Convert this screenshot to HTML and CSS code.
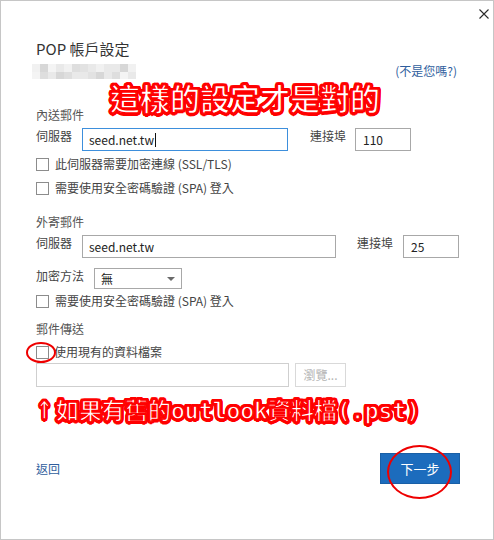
FILE: index.html
```html
<!DOCTYPE html>
<html lang="zh-Hant">
<head>
<meta charset="utf-8">
<title>POP 帳戶設定</title>
<link rel="stylesheet" href="styles.css">
</head>
<body>
<div class="window">
  <div class="topbar">
    <svg class="close" width="10" height="10" viewBox="0 0 10 10"><path d="M0.5 0.5 L9.5 9.5 M9.5 0.5 L0.5 9.5" stroke="#2b2b2b" stroke-width="1.1" fill="none"/></svg>
  </div>
  <div class="content">
    <h1 class="title">POP 帳戶設定</h1>
    <div class="account">
      <div class="mosaic">
        <span></span><span></span><span></span><span></span><span></span><span></span><span></span><span></span><span></span><span></span><span></span><span></span><span></span>
        <span></span><span></span><span></span><span></span><span></span><span></span><span></span><span></span><span></span><span></span><span></span><span></span><span></span>
      </div>
      <a class="link">(不是您嗎?)</a>
    </div>

    <div class="section sec-in">內送郵件</div>
    <div class="row">
      <span class="lbl lbl-server">伺服器</span>
      <div class="field focused in-server"><span>seed.net.tw</span><span class="caret"></span></div>
      <span class="lbl lbl-port port1">連接埠</span>
      <div class="field port">110</div>
    </div>
    <div class="check c1"><span class="box"></span><span>此伺服器需要加密連線 (SSL/TLS)</span></div>
    <div class="check c2"><span class="box"></span><span>需要使用安全密碼驗證 (SPA) 登入</span></div>

    <div class="section sec-out">外寄郵件</div>
    <div class="row">
      <span class="lbl lbl-server">伺服器</span>
      <div class="field out-server">seed.net.tw</div>
      <span class="lbl lbl-port port2">連接埠</span>
      <div class="field port">25</div>
    </div>
    <div class="row enc-row">
      <span class="lbl lbl-enc">加密方法</span>
      <div class="select"><span>無</span><span class="arrow"></span></div>
    </div>
    <div class="check c3"><span class="box"></span><span>需要使用安全密碼驗證 (SPA) 登入</span></div>

    <div class="section sec-deliver">郵件傳送</div>
    <div class="check c4"><span class="box"></span><span>使用現有的資料檔案</span></div>
    <div class="row file-row">
      <div class="field file"></div>
      <div class="browse">瀏覽...</div>
    </div>

    <div class="footer">
      <a class="link back">返回</a>
      <div class="next">下一步</div>
    </div>
  </div>

  <div class="note note1">這樣的設定才是對的</div>
  <div class="note note2"><span class="up">↑</span>如果有舊的<span class="mono">outlook</span>資料檔<span class="mono">(.pst)</span></div>
  <div class="ring ring-check"></div>
  <div class="ring ring-next"></div>
</div>
</body>
</html>
```

FILE: styles.css
```css
html, body {
  margin: 0;
  padding: 0;
  background: #ffffff;
}

body {
  font-family: "Noto Sans CJK TC", "Noto Sans", sans-serif;
  color: #444444;
  font-size: 12px;
  line-height: 16px;
}

.window {
  position: relative;
  width: 494px;
  height: 540px;
  box-sizing: border-box;
  border: 1px solid #c6c6c6;
  background: #ffffff;
  overflow: hidden;
}

.topbar {
  display: flex;
  justify-content: flex-end;
  height: 26px;
  box-sizing: border-box;
  padding: 8px 4px 0 0;
}

.close {
  display: block;
}

.content {
  padding: 12px 33px 0 35px;
  display: flex;
  flex-direction: column;
}

.title {
  margin: 0;
  font-size: 15px;
  line-height: 20px;
  font-weight: 400;
  color: #333333;
}

.account {
  margin-top: 4px;
  height: 16px;
  display: flex;
  justify-content: space-between;
  align-items: center;
}

.mosaic {
  margin-left: -4px;
  display: grid;
  grid-template-columns: repeat(13, 8px);
  grid-template-rows: 8px 7px;
}

.mosaic span { background: #e9e9e9; }
.mosaic span:nth-child(3n) { background: #dedede; }
.mosaic span:nth-child(4n+1) { background: #f1f1f1; }
.mosaic span:nth-child(5n+2) { background: #d7d7d7; }
.mosaic span:nth-child(7n) { background: #e2e2e2; }
.mosaic span:nth-child(11n+3) { background: #f4f4f4; }

.link {
  color: #2f5e9d;
  font-size: 12px;
  text-decoration: none;
}

.account .link {
  margin-right: 3px;
}

.section {
  color: #555555;
}

.sec-in { margin-top: 28px; }
.sec-out { margin-top: 18px; }
.sec-deliver { margin-top: 12px; }

.row {
  display: flex;
  align-items: flex-start;
  margin-top: 5px;
}

.lbl {
  color: #444444;
  flex: none;
}

.lbl-server { width: 46px; }
.lbl-enc { width: 48px; margin-right: 10px; }
.lbl-port { width: 36px; }
.port1 { margin-left: 22px; margin-right: 9px; }
.port2 { margin-left: 21px; margin-right: 10px; }

.field {
  box-sizing: border-box;
  height: 23px;
  border: 1px solid #a8a8a8;
  background: #ffffff;
  color: #222222;
  font-size: 12px;
  line-height: 21px;
  padding: 0 6px;
  display: flex;
  align-items: center;
  flex: none;
}

.focused {
  border-color: #3d8fdc;
}

.caret {
  display: inline-block;
  width: 1px;
  height: 14px;
  background: #111111;
  margin-left: 1px;
}

.in-server { width: 206px; }
.out-server { width: 254px; }
.port { width: 56px; padding-left: 7px; }

.enc-row { margin-top: 10px; }

.select {
  box-sizing: border-box;
  width: 88px;
  height: 21px;
  border: 1px solid #a8a8a8;
  display: flex;
  justify-content: space-between;
  align-items: center;
  padding: 0 6px 0 6px;
  color: #222222;
  font-size: 12px;
}

.arrow {
  width: 0;
  height: 0;
  border-left: 4px solid transparent;
  border-right: 4px solid transparent;
  border-top: 4px solid #6a6a6a;
  margin-top: 1px;
}

.check {
  display: flex;
  align-items: center;
  height: 16px;
  color: #444444;
}

.check .box {
  width: 13px;
  height: 13px;
  box-sizing: border-box;
  border: 1px solid #8c8c8c;
  background: #ffffff;
  margin-right: 6px;
  flex: none;
}

.c1 { margin-top: 5px; }
.c2 { margin-top: 8px; }
.c3 { margin-top: 4px; }
.c4 { margin-top: 7px; }
.c4 .box { margin-right: 5px; }

.file-row {
  margin-top: 3px;
  gap: 6px;
}

.file {
  width: 253px;
  height: 24px;
  border-color: #cfcfcf;
}

.browse {
  box-sizing: border-box;
  width: 51px;
  height: 24px;
  border: 1px solid #d9d9d9;
  color: #b4b4b4;
  font-size: 12px;
  display: flex;
  align-items: center;
  justify-content: center;
}

.footer {
  margin-top: 66px;
  display: flex;
  justify-content: space-between;
  align-items: center;
}

.back {
  font-size: 12px;
}

.next {
  box-sizing: border-box;
  width: 80px;
  height: 31px;
  background: #1c6cbd;
  border: 1px solid #195fa6;
  color: #ffffff;
  font-size: 13px;
  display: flex;
  align-items: center;
  justify-content: center;
}

/* annotations drawn over the dialog */
.note {
  position: absolute;
  color: #ffffff;
  font-weight: 700;
  white-space: nowrap;
  -webkit-text-stroke: 1.3px #f00;
  text-shadow:
    2.5px 0 0 #f00, -2.5px 0 0 #f00, 0 2.5px 0 #f00, 0 -2.5px 0 #f00,
    1.8px 1.8px 0 #f00, -1.8px 1.8px 0 #f00, 1.8px -1.8px 0 #f00, -1.8px -1.8px 0 #f00,
    1px 2.3px 0 #f00, -1px 2.3px 0 #f00, 1px -2.3px 0 #f00, -1px -2.3px 0 #f00,
    2.3px 1px 0 #f00, -2.3px 1px 0 #f00, 2.3px -1px 0 #f00, -2.3px -1px 0 #f00;
}

.note1 {
  left: 109px;
  top: 80px;
  font-size: 30px;
  line-height: 32px;
}

.note2 {
  left: 35px;
  top: 395px;
  font-size: 23px;
  line-height: 26px;
  font-family: "Noto Sans CJK TC", sans-serif;
}

.up {
  display: inline-block;
  width: 20px;
  font-family: "DejaVu Sans", sans-serif;
  font-size: 25px;
  font-weight: 700;
  transform: scaleX(0.8);
  transform-origin: left center;
}

.mono {
  font-family: "DejaVu Sans Mono", monospace;
}

.ring {
  position: absolute;
  box-sizing: border-box;
  border: 2px solid #ee0000;
  border-radius: 50%;
}

.ring-check {
  left: 25px;
  top: 341px;
  width: 30px;
  height: 21px;
}

.ring-next {
  left: 386px;
  top: 444px;
  width: 65px;
  height: 54px;
}
```
